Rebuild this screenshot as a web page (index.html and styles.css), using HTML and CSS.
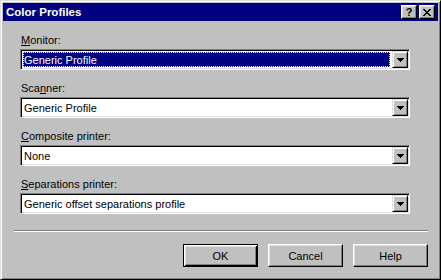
FILE: index.html
```html
<!DOCTYPE html>
<html>

<head>
  <meta charset="utf-8">
  <title>Color Profiles</title>
  <link rel="stylesheet" href="styles.css">
</head>

<body>
  <div class="window">
    <div class="titlebar">
      <span class="title">Color Profiles</span>
      <div class="caption-buttons">
        <span class="caption-btn help-btn">?</span>
        <span class="caption-btn close-btn">
          <svg width="8" height="7" viewBox="0 0 8 7" shape-rendering="crispEdges">
            <path d="M0 0h2v1H0z M6 0h2v1H6z M1 1h2v1H1z M5 1h2v1H5z M2 2h4v1H2z M3 3h2v1H3z M2 4h4v1H2z M1 5h2v1H1z M5 5h2v1H5z M0 6h2v1H0z M6 6h2v1H6z" fill="#000"/>
          </svg>
        </span>
      </div>
    </div>

    <div class="content">
      <div class="fields">
        <div class="field">
          <label><u>M</u>onitor:</label>
          <div class="combo focused">
            <div class="value">Generic Profile</div>
            <div class="drop">
              <svg width="7" height="4" viewBox="0 0 7 4" shape-rendering="crispEdges"><path d="M0 0h7v1H0z M1 1h5v1H1z M2 2h3v1H2z M3 3h1v1H3z" fill="#000"/></svg>
            </div>
          </div>
        </div>

        <div class="field">
          <label>Sca<u>n</u>ner:</label>
          <div class="combo">
            <div class="value">Generic Profile</div>
            <div class="drop">
              <svg width="7" height="4" viewBox="0 0 7 4" shape-rendering="crispEdges"><path d="M0 0h7v1H0z M1 1h5v1H1z M2 2h3v1H2z M3 3h1v1H3z" fill="#000"/></svg>
            </div>
          </div>
        </div>

        <div class="field">
          <label><u>C</u>omposite printer:</label>
          <div class="combo">
            <div class="value">None</div>
            <div class="drop">
              <svg width="7" height="4" viewBox="0 0 7 4" shape-rendering="crispEdges"><path d="M0 0h7v1H0z M1 1h5v1H1z M2 2h3v1H2z M3 3h1v1H3z" fill="#000"/></svg>
            </div>
          </div>
        </div>

        <div class="field">
          <label><u>S</u>eparations printer:</label>
          <div class="combo">
            <div class="value">Generic offset separations profile</div>
            <div class="drop">
              <svg width="7" height="4" viewBox="0 0 7 4" shape-rendering="crispEdges"><path d="M0 0h7v1H0z M1 1h5v1H1z M2 2h3v1H2z M3 3h1v1H3z" fill="#000"/></svg>
            </div>
          </div>
        </div>
      </div>

      <div class="separator"></div>

      <div class="buttons">
        <button class="btn default">OK</button>
        <button class="btn">Cancel</button>
        <button class="btn">Help</button>
      </div>
    </div>
  </div>
</body>

</html>
```

FILE: styles.css
```css
body {
  margin: 0;
  background-color: #c0c0c0;
  font-family: "Liberation Sans", Arial, sans-serif;
  font-size: 11px;
  color: #000;
}

/*///////////////////////////////////////////////////////////////////////////*/
.window {
  width: 441px;
  height: 280px;
  box-sizing: border-box;
  padding: 2px;
  border: 1px solid;
  border-color: #dfdfdf #000 #000 #dfdfdf;
  box-shadow: inset 1px 1px #fff, inset -1px -1px #808080;
  background-color: #c0c0c0;
}

.titlebar {
  height: 18px;
  display: flex;
  align-items: center;
  justify-content: space-between;
  padding: 0 3px 0 3px;
  background-color: #000080;
  color: #fff;
}

.title {
  font-weight: bold;
  font-size: 11.5px;
}

.caption-buttons {
  display: flex;
  gap: 2px;
}

.caption-btn {
  width: 16px;
  height: 14px;
  box-sizing: border-box;
  display: flex;
  align-items: center;
  justify-content: center;
  border: 1px solid;
  border-color: #fff #000 #000 #fff;
  box-shadow: inset -1px -1px #808080, inset 1px 1px #dfdfdf;
  background-color: #c0c0c0;
  color: #000;
  font-weight: bold;
  font-size: 11px;
  line-height: 1;
}

/*///////////////////////////////////////////////////////////////////////////*/
.content {
  padding: 13px 10px 0 11px;
}

.fields {
  padding: 0 18px 0 6px;
}

.field + .field {
  margin-top: 12px;
}

.field label {
  display: block;
  line-height: 13px;
  padding-left: 1px;
  margin-bottom: 2px;
}

.combo {
  display: flex;
  height: 21px;
  box-sizing: border-box;
  padding: 1px;
  border: 1px solid;
  border-color: #808080 #fff #fff #808080;
  box-shadow: inset 1px 1px #000, inset -1px -1px #dfdfdf;
  background-color: #fff;
}

.value {
  flex: 1;
  display: flex;
  align-items: center;
  margin: 1px 2px 1px 1px;
  border: 1px solid transparent;
  white-space: nowrap;
}

.focused .value {
  background-color: #000080;
  color: #fff;
  border: 1px dotted #fff8a0;
}

.drop {
  width: 16px;
  flex: none;
  box-sizing: border-box;
  display: flex;
  align-items: center;
  justify-content: center;
  border: 1px solid;
  border-color: #dfdfdf #000 #000 #dfdfdf;
  box-shadow: inset 1px 1px #fff, inset -1px -1px #808080;
  background-color: #c0c0c0;
}

/*///////////////////////////////////////////////////////////////////////////*/
.separator {
  margin-top: 16px;
  border-top: 1px solid #808080;
  border-bottom: 1px solid #fff;
}

.buttons {
  display: flex;
  justify-content: flex-end;
  gap: 10px;
  margin-top: 12px;
}

.btn {
  width: 75px;
  height: 23px;
  box-sizing: border-box;
  padding: 0;
  border: 1px solid;
  border-color: #fff #000 #000 #fff;
  box-shadow: inset -1px -1px #808080, inset 1px 1px #dfdfdf;
  background-color: #c0c0c0;
  font-family: "Liberation Sans", Arial, sans-serif;
  font-size: 11px;
  color: #000;
}

.btn.default {
  border-color: #000;
  box-shadow: inset 1px 1px #fff, inset -1px -1px #000, inset 2px 2px #dfdfdf, inset -2px -2px #808080;
}
```
